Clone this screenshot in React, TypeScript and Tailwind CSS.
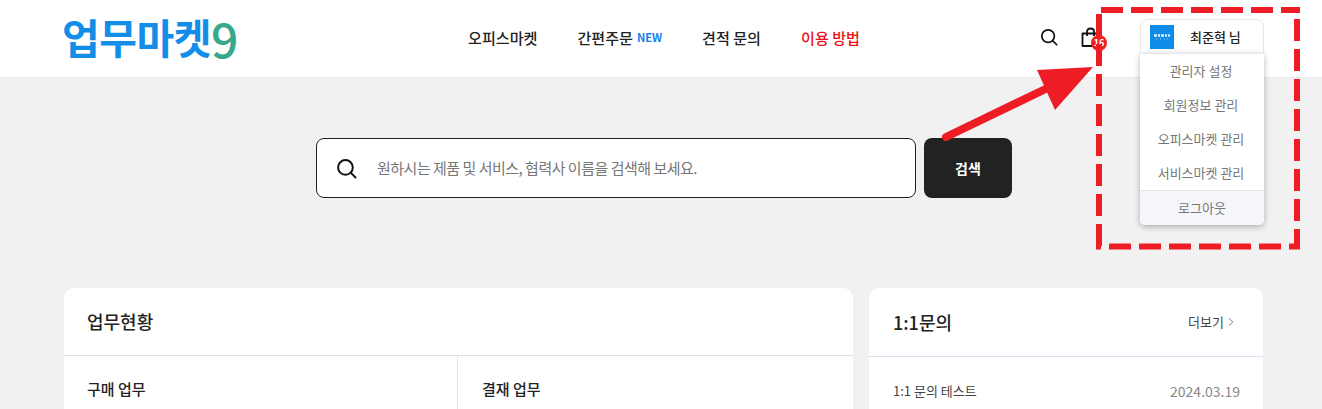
import React from 'react';
import { ChevronRight } from 'lucide-react';

const FONT = 'font-["Noto_Sans_CJK_KR","Noto_Sans",sans-serif]';

const SearchIcon = ({ size }: { size: number }) => (
    <svg width={size} height={size} viewBox="0 0 20 20" fill="none" stroke="#111" strokeWidth="1.9" strokeLinecap="round">
        <circle cx="9" cy="9" r="7" />
        <path d="M14.2 14.2 L18.6 18.6" />
    </svg>
);

const BagIcon = () => (
    <svg width="20" height="20" viewBox="0 0 20 20" fill="none" stroke="#111" strokeWidth="1.8" strokeLinejoin="round">
        <path d="M2.5 6.5 H18.5 V19 H2.5 Z" />
        <path d="M7 9 V4.5 C7 2.6 8.6 1.5 10.5 1.5 C12.4 1.5 14 2.6 14 4.5 V9" />
    </svg>
);

// company logo in the avatar, too small to read
const AvatarLogo = () => (
    <svg width="24" height="24" viewBox="0 0 24 24">
        <rect width="24" height="24" fill="#108ce8" />
        <path d="M4 10.5h3M8 10.5h2M11 10.5h3M15 10.5h2M18 10.5h2" stroke="#fff" strokeWidth="2.4" opacity="0.85" />
        <path d="M6 14h1M10 14h1M14 14h1M17 14h1" stroke="#fff" strokeWidth="1" opacity="0.55" />
    </svg>
);

const menuItems = ['관리자 설정', '회원정보 관리', '오피스마켓 관리', '서비스마켓 관리'];

const ProfileMenu = () => (
    <div className="relative w-[124px]">
        <div className="flex h-[35px] items-center rounded-t-[8px] border border-[#e6e8ec] bg-white pl-[9px]">
            <AvatarLogo />
            <span className="ml-4 text-[13px] font-medium text-[#222]">최준혁 님</span>
        </div>
        <div className="absolute left-0 top-[34px] z-10 w-full overflow-hidden rounded-b-[5px] bg-white shadow-[0_2px_6px_rgba(0,0,0,0.28)]">
            <div className="border-t border-[#e6e8ec]">
                {menuItems.map(item => (
                    <div key={item} className="flex h-[34px] items-center justify-center pr-[2px] text-[13px] text-[#777]">{item}</div>
                ))}
            </div>
            <div className="flex h-[35px] items-center justify-center border-t border-[#e3e4e8] bg-[#f5f6fa] text-[13px] text-[#777]">로그아웃</div>
        </div>
    </div>
);

const Header = () => (
    <header className="flex h-[78px] items-center border-b border-[#e8e8e8] bg-white pl-[62px]">
        <div className="mb-1 flex w-[176px] items-center text-[41px] font-bold leading-none tracking-[-0.5px] text-[#128ee9]">
            <span>업무마켓</span>
            <span className="text-[48px] font-medium text-[#36a98a]">9</span>
        </div>
        <nav className="mb-[2px] ml-[230px] flex items-center gap-10 text-[15.1px] font-medium text-[#222]">
            <span>오피스마켓</span>
            <span className="flex items-center gap-1">
                간편주문
                <span className="text-[11px] font-bold text-[#0f7ef5]">NEW</span>
            </span>
            <span>견적 문의</span>
            <span className="text-[#f00f14]">이용 방법</span>
        </nav>
        <div className="mb-1 ml-auto mr-[58px] flex items-center">
            <SearchIcon size={18} />
            <div className="relative ml-[22px] flex">
                <BagIcon />
                <span className="absolute left-[11px] top-[8px] flex h-[16px] w-[16px] items-center justify-center rounded-full bg-[#f0201c] text-[9px] font-bold text-white">16</span>
            </div>
            <div className="ml-10">
                <ProfileMenu />
            </div>
        </div>
    </header>
);

const SearchBar = () => (
    <div className="mt-[60px] flex justify-center gap-2 pl-[6px]">
        <div className="flex h-[60px] w-[600px] items-center rounded-[8px] border border-[#222] bg-white pl-[19px]">
            <SearchIcon size={21} />
            <span className="ml-5 text-[15px] tracking-[-0.5px] text-[#777]">원하시는 제품 및 서비스, 협력사 이름을 검색해 보세요.</span>
        </div>
        <button className="h-[60px] w-[88px] rounded-[8px] bg-[#222] text-[14px] font-bold text-white">검색</button>
    </div>
);

const Cards = () => (
    <div className="mt-[90px] flex gap-4 pl-16">
        <section className="w-[789px] rounded-t-[10px] bg-white">
            <div className="flex h-[68px] items-center border-b border-[#dfe1ea] pl-[23px] text-[18px] font-medium text-[#222]">업무현황</div>
            <div className="flex">
                <div className="h-[60px] w-[394px] border-r border-[#dfe1ea] pl-[23px] pt-[23px] text-[15px] font-medium leading-[20px] text-[#222]">구매 업무</div>
                <div className="h-[60px] px-6 pt-[23px] text-[15px] font-medium leading-[20px] text-[#222]">결재 업무</div>
            </div>
        </section>
        <section className="w-[394px] rounded-t-[10px] bg-white">
            <div className="flex h-[69px] items-center justify-between border-b border-[#dde0f0] pl-6 pr-[25px]">
                <span className="text-[18px] font-medium text-[#222]">1:1문의</span>
                <span className="flex items-center text-[13px] text-[#444]">
                    더보기
                    <ChevronRight size={14} strokeWidth={1.2} />
                </span>
            </div>
            <div className="flex justify-between pl-6 pr-[23px] pt-[24px] leading-[20px]">
                <span className="text-[13px] text-[#444]">1:1 문의 테스트</span>
                <span className="text-[14px] text-[#888]">2024.03.19</span>
            </div>
        </section>
    </div>
);

// red markup drawn on top of the screenshot
const Annotation = () => (
    <svg className="pointer-events-none absolute left-0 top-0 z-20" width="1322" height="409" fill="none" stroke="#ee1c25">
        <g strokeWidth="6" strokeDasharray="22 8">
            <path d="M1097 10 H1300" strokeDashoffset="26" />
            <path d="M1099 7 V249" strokeDashoffset="23" />
            <path d="M1297 7 V249" strokeDashoffset="18" />
            <path d="M1096 246.5 H1300" strokeDashoffset="17" />
        </g>
        <path d="M946 137 L1056 84" strokeWidth="8" strokeLinecap="round" />
        <path d="M1093 67 L1037 70 L1055 110 Z" fill="#ee1c25" stroke="none" />
    </svg>
);

export default function App() {
    return (
        <div className={`relative h-[409px] w-[1322px] overflow-hidden bg-[#f1f1f1] ${FONT}`}>
            <Header />
            <SearchBar />
            <Cards />
            <Annotation />
        </div>
    );
}
